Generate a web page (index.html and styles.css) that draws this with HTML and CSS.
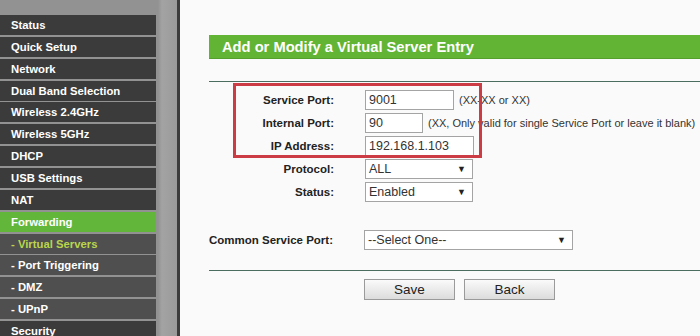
FILE: index.html
```html
<!DOCTYPE html>
<html lang="en">
<head>
    <meta charset="UTF-8">
    <title>Virtual Servers</title>
    <link rel="stylesheet" href="styles.css">
</head>
<body>
    <div class="page">
        <nav class="sidebar">
            <a class="menu-item">Status</a>
            <a class="menu-item">Quick Setup</a>
            <a class="menu-item">Network</a>
            <a class="menu-item">Dual Band Selection</a>
            <a class="menu-item">Wireless 2.4GHz</a>
            <a class="menu-item">Wireless 5GHz</a>
            <a class="menu-item">DHCP</a>
            <a class="menu-item">USB Settings</a>
            <a class="menu-item">NAT</a>
            <a class="menu-item active">Forwarding</a>
            <a class="menu-item sub current">- Virtual Servers</a>
            <a class="menu-item sub">- Port Triggering</a>
            <a class="menu-item sub">- DMZ</a>
            <a class="menu-item sub">- UPnP</a>
            <a class="menu-item">Security</a>
        </nav>

        <main class="content">
            <div class="title-bar">Add or Modify a Virtual Server Entry</div>

            <div class="entry-form">
                <!-- annotation box drawn over the first three rows -->
                <div class="highlight"></div>

                <div class="row">
                    <label class="label">Service Port:</label>
                    <input class="field w-service" type="text" value="9001">
                    <span class="hint">(XX-XX or XX)</span>
                </div>
                <div class="row">
                    <label class="label">Internal Port:</label>
                    <input class="field w-internal" type="text" value="90">
                    <span class="hint">(XX, Only valid for single Service Port or leave it blank)</span>
                </div>
                <div class="row">
                    <label class="label">IP Address:</label>
                    <input class="field w-ip" type="text" value="192.168.1.103">
                </div>
                <div class="row">
                    <label class="label">Protocol:</label>
                    <div class="select w-select">
                        <span class="select-text">ALL</span>
                        <span class="arrow">▼</span>
                    </div>
                </div>
                <div class="row">
                    <label class="label">Status:</label>
                    <div class="select w-select">
                        <span class="select-text">Enabled</span>
                        <span class="arrow">▼</span>
                    </div>
                </div>

                <div class="row common">
                    <label class="label left">Common Service Port:</label>
                    <div class="select w-common">
                        <span class="select-text">--Select One--</span>
                        <span class="arrow">▼</span>
                    </div>
                </div>
            </div>

            <div class="actions">
                <button class="btn">Save</button>
                <button class="btn">Back</button>
            </div>
        </main>
    </div>
</body>
</html>
```

FILE: styles.css
```css
html, body {
    margin: 0;
    height: 336px;
    overflow: hidden;
}

body {
    font-family: 'Liberation Sans', Arial, sans-serif;
    background-color: #fafafa;
    color: #222;
}

.page {
    display: flex;
    height: 336px;
}

/* left menu */
.sidebar {
    width: 177px;
    flex-shrink: 0;
    background: linear-gradient(to right, #929292 0, #929292 158px, #a3a3a3 162px, #9a9a9a 177px);
    border-right: 3px solid #3c3c3c;
    padding-top: 15px;
    box-sizing: content-box;
}

.menu-item {
    display: block;
    width: 145px;
    height: 20px;
    line-height: 20px;
    padding-left: 11px;
    margin-bottom: 1.86px;
    background-color: #3b3b3b;
    color: #fff;
    font-size: 11.3px;
    font-weight: bold;
    white-space: nowrap;
}

.menu-item.sub {
    background-color: #4f4f4f;
}

.menu-item.active {
    background-color: #62b63a;
}

.menu-item.current {
    color: #b9d54c;
}

/* main area */
.content {
    flex: 1;
    padding-left: 29px;
    background-color: #fafafa;
}

.title-bar {
    margin-top: 35px;
    height: 24px;
    line-height: 24px;
    padding-left: 13px;
    background-color: #62b434;
    border-bottom: 1px solid #55a02c;
    color: #fff;
    font-size: 14.7px;
    font-weight: bold;
    box-sizing: border-box;
}

.entry-form {
    position: relative;
    margin-top: 22px;
    border-top: 1px solid #4a6d60;
    padding-top: 6px;
}

.highlight {
    position: absolute;
    left: 24px;
    top: 1px;
    width: 243px;
    height: 69px;
    border: 3px solid #cc3c44;
}

.row {
    display: flex;
    align-items: center;
    height: 23px;
}

.label {
    width: 125px;
    margin-right: 31px;
    text-align: right;
    font-size: 11.5px;
    font-weight: bold;
    color: #222;
    flex-shrink: 0;
    white-space: nowrap;
}

.label.left {
    text-align: left;
}

.field {
    height: 20px;
    box-sizing: border-box;
    border: 1px solid #a4a4a4;
    background-color: #fff;
    padding: 0 3px;
    font-family: 'Liberation Sans', Arial, sans-serif;
    font-size: 12.5px;
    color: #333;
}

.w-service { width: 89px; }
.w-internal { width: 58px; }
.w-ip { width: 109px; }
.w-select { width: 108px; }
.w-common { width: 209px; margin-left: -1px; }

.hint {
    margin-left: 5px;
    font-size: 11px;
    color: #333;
    white-space: nowrap;
}

.select {
    display: flex;
    align-items: center;
    justify-content: space-between;
    height: 20px;
    box-sizing: border-box;
    border: 1px solid #a4a4a4;
    background-color: #fff;
    padding: 0 6px 0 3px;
    font-size: 12.5px;
    color: #333;
}

.arrow {
    font-size: 9px;
    color: #222;
}

.row.common {
    margin-top: 25px;
}

.actions {
    margin-top: 19px;
    border-top: 1px solid #4a6d60;
    padding-top: 8px;
    padding-left: 155px;
    display: flex;
    gap: 9px;
}

.btn {
    width: 91px;
    height: 21px;
    border: 1px solid #9a9a9a;
    background: linear-gradient(#fafafa, #dcdcdc);
    font-family: 'Liberation Sans', Arial, sans-serif;
    font-size: 13.5px;
    color: #222;
    padding: 0;
}
```
